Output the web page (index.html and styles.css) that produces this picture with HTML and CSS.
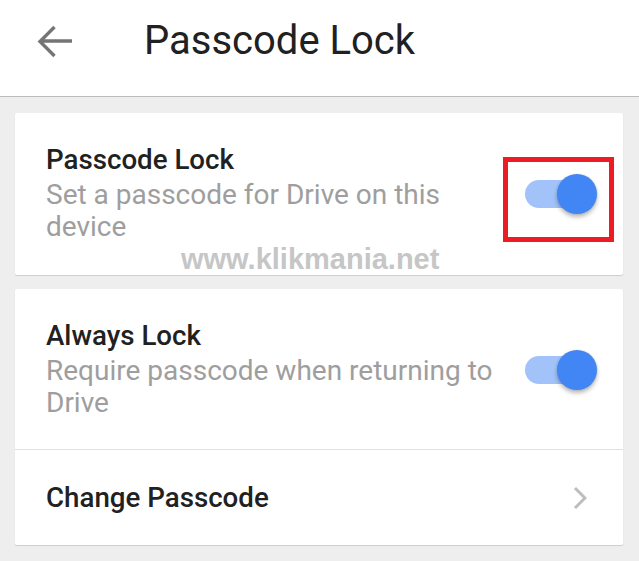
FILE: index.html
```html
<!DOCTYPE html>
<html lang="en">
<head>
<meta charset="utf-8">
<title>Passcode Lock</title>
<link rel="stylesheet" href="styles.css">
</head>
<body>
<header class="appbar">
  <svg class="back" width="36" height="34" viewBox="0 0 36 34" aria-hidden="true">
    <path d="M35 16H3.5M17.5 2L3 16.5 17.5 31" fill="none" stroke="#757575" stroke-width="3.4"/>
  </svg>
  <h1 class="appbar-title">Passcode Lock</h1>
</header>
<main class="content">
  <section class="card card-first">
    <div class="row row-toggle row-first">
      <div class="row-text">
        <div class="row-title">Passcode Lock</div>
        <div class="row-sub">Set a passcode for Drive on this device</div>
      </div>
      <div class="switch">
        <span class="track"></span>
        <span class="thumb"></span>
      </div>
    </div>
    <div class="highlight"></div>
  </section>
  <div class="watermark">www.klikmania.net</div>
  <section class="card card-second">
    <div class="row row-toggle row-always">
      <div class="row-text">
        <div class="row-title">Always Lock</div>
        <div class="row-sub">Require passcode when returning to Drive</div>
      </div>
      <div class="switch">
        <span class="track"></span>
        <span class="thumb"></span>
      </div>
    </div>
    <div class="row row-link">
      <div class="row-title">Change Passcode</div>
      <svg class="chevron" width="14" height="24" viewBox="0 0 14 24" aria-hidden="true">
        <path d="M2 2L12 12 2 22" fill="none" stroke="#bdbdbd" stroke-width="3"/>
      </svg>
    </div>
  </section>
</main>
</body>
</html>
```

FILE: styles.css
```css
* { box-sizing: border-box; }

html, body {
  margin: 0;
  padding: 0;
}

body {
  width: 639px;
  height: 561px;
  overflow: hidden;
  background: #eeeeee;
  font-family: Roboto, "Noto Sans", "Liberation Sans", sans-serif;
  color: #212121;
  position: relative;
}

.appbar {
  height: 97px;
  background: #ffffff;
  border-bottom: 1px solid #bdbdbd;
  display: flex;
  align-items: flex-start;
  padding: 17px 0 0 37px;
}

.back {
  display: block;
  margin-top: 8px;
  flex: none;
}

.appbar-title {
  margin: 0 0 0 71px;
  font-size: 40px;
  line-height: 48px;
  font-weight: 400;
  color: #212121;
}

.content {
  padding: 16px 16px 0 15px;
  display: flex;
  flex-direction: column;
  gap: 14px;
}

.card {
  background: #ffffff;
  border-radius: 2px;
  box-shadow: 0 1px 1px rgba(0, 0, 0, 0.14);
  position: relative;
}

.row {
  display: flex;
  align-items: center;
  padding-left: 31px;
}

.row-toggle {
  padding-right: 26px;
  gap: 20px;
}

.row-first {
  padding-top: 31px;
  padding-bottom: 32px;
}

.row-always {
  padding-top: 31px;
  padding-bottom: 30px;
}

.row-text {
  flex: 1;
  min-width: 0;
}

.row-title {
  font-size: 27.7px;
  line-height: 32px;
  font-weight: 500;
  color: #212121;
}

.row-sub {
  margin-top: 3px;
  font-size: 28px;
  line-height: 32px;
  font-weight: 400;
  color: #9e9e9e;
}

.switch {
  flex: none;
  width: 72px;
  height: 40px;
  display: grid;
}

.track {
  grid-area: 1 / 1;
  align-self: center;
  justify-self: start;
  width: 66px;
  height: 28px;
  border-radius: 14px;
  background: #a1c3f9;
}

.thumb {
  grid-area: 1 / 1;
  justify-self: end;
  width: 40px;
  height: 40px;
  border-radius: 50%;
  background: #4285f4;
  box-shadow: 0 3px 4px rgba(0, 0, 0, 0.28), 0 0 2px rgba(0, 0, 0, 0.12);
}

.row-link {
  height: 96px;
  border-top: 1px solid #e0e0e0;
  justify-content: space-between;
  padding-right: 36px;
}

.chevron {
  display: block;
  margin-top: 1px;
}

.highlight {
  position: absolute;
  left: 488px;
  top: 44px;
  width: 111px;
  height: 85px;
  border: 5px solid #ed1c24;
}

.watermark {
  position: absolute;
  left: 181px;
  top: 245px;
  font-family: "Liberation Sans", Arial, sans-serif;
  font-weight: 700;
  font-size: 29px;
  line-height: 29px;
  color: #c6c6c6;
  white-space: nowrap;
}
```
